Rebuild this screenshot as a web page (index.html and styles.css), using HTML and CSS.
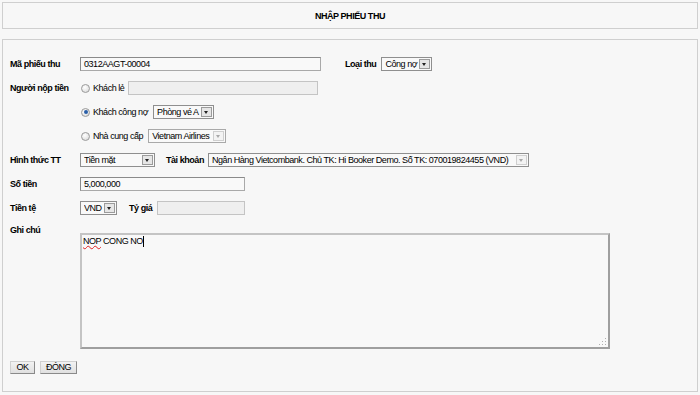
FILE: index.html
```html
<!DOCTYPE html>
<html lang="vi">
<head>
<meta charset="utf-8">
<title>Nhập phiếu thu</title>
<link rel="stylesheet" href="styles.css">
</head>
<body>
<div class="page">
  <div class="header">NHẬP PHIẾU THU</div>
  <div class="panel">
    <div class="row">
      <span class="lbl">Mã phiếu thu</span>
      <span class="input w-ma">0312AAGT-00004</span>
      <span class="lbl lbl-inline lbl-loai">Loại thu</span>
      <span class="select w-loai"><span class="sel-text">Công nợ</span><span class="arrow"></span></span>
    </div>
    <div class="row">
      <span class="lbl">Người nộp tiền</span>
      <span class="radio"></span>
      <span class="opt">Khách lẻ</span>
      <span class="input disabled w-le"></span>
    </div>
    <div class="row">
      <span class="lbl"></span>
      <span class="radio checked"></span>
      <span class="opt">Khách công nợ</span>
      <span class="select w-kcn"><span class="sel-text">Phòng vé A</span><span class="arrow"></span></span>
    </div>
    <div class="row">
      <span class="lbl"></span>
      <span class="radio"></span>
      <span class="opt">Nhà cung cấp</span>
      <span class="select disabled w-ncc"><span class="sel-text">Vietnam Airlines</span><span class="arrow"></span></span>
    </div>
    <div class="row">
      <span class="lbl">Hình thức TT</span>
      <span class="select w-htt"><span class="sel-text">Tiền mặt</span><span class="arrow"></span></span>
      <span class="lbl lbl-inline lbl-tk">Tài khoản</span>
      <span class="select disabled-arrow w-tk"><span class="sel-text">Ngân Hàng Vietcombank. Chủ TK: Hi Booker Demo. Số TK: 070019824455 (VND)</span><span class="arrow"></span></span>
    </div>
    <div class="row">
      <span class="lbl">Số tiền</span>
      <span class="input w-tien">5,000,000</span>
    </div>
    <div class="row">
      <span class="lbl">Tiền tệ</span>
      <span class="select w-vnd"><span class="sel-text">VND</span><span class="arrow"></span></span>
      <span class="lbl lbl-inline lbl-tg">Tỷ giá</span>
      <span class="input disabled w-tg"></span>
    </div>
    <div class="row row-note">
      <span class="lbl">Ghi chú</span>
    </div>
    <div class="note-wrap">
      <div class="textarea"><span class="typo">NOP</span> CONG NO<span class="caret"></span><span class="grip"></span></div>
    </div>
    <div class="buttons">
      <span class="btn btn-ok">OK</span>
      <span class="btn btn-close">ĐÓNG</span>
    </div>
  </div>
</div>
</body>
</html>
```
FILE: styles.css
```css
html, body {
  margin: 0;
  padding: 0;
  background: #f7f7f7;
}
body {
  font-family: "Liberation Sans", Arial, sans-serif;
  font-size: 9px;
  letter-spacing: -0.45px;
  color: #000;
}
.page {
  padding: 2px 2px 0 2px;
  display: flex;
  flex-direction: column;
  gap: 10px;
}
.header {
  height: 25px;
  border: 1px solid #cfcfcf;
  display: flex;
  align-items: center;
  justify-content: center;
  font-weight: bold;
}
.panel {
  border: 1px solid #cfcfcf;
  height: 339px;
  padding: 12px 7px 0 7px;
  display: flex;
  flex-direction: column;
}
.row {
  height: 24px;
  display: flex;
  align-items: center;
}
.lbl {
  width: 70px;
  flex: none;
  font-weight: bold;
  white-space: nowrap;
}
.lbl-inline { width: auto; }
.lbl-loai { margin-left: 24px; margin-right: 5px; }
.lbl-tk { margin-left: 11px; margin-right: 4px; }
.lbl-tg { margin-left: 12px; margin-right: 5px; }
.input {
  box-sizing: border-box;
  height: 14px;
  border: 1px solid #a9a9a9;
  border-top-color: #8a8a8a;
  border-left-color: #8a8a8a;
  background: #f9f9f9;
  padding: 0 3px;
  display: flex;
  align-items: center;
  line-height: 12px;
}
.input.disabled {
  background: #efefef;
  border-color: #c4c4c4;
}
.w-ma { width: 241px; }
.w-le { width: 190px; margin-left: 4px; }
.w-tien { width: 165px; }
.w-tg { width: 88px; }
.radio {
  box-sizing: border-box;
  width: 9px;
  height: 9px;
  border-radius: 50%;
  border: 1px solid #9a9a9a;
  background: radial-gradient(circle at 40% 35%, #ffffff 0%, #e2e2e2 70%);
  margin-left: 1px;
  margin-right: 3px;
  display: flex;
  align-items: center;
  justify-content: center;
  flex: none;
}
.radio.checked::after {
  content: "";
  width: 4px;
  height: 4px;
  border-radius: 50%;
  background: #2a5fa8;
}
.opt { white-space: nowrap; }
.select {
  box-sizing: border-box;
  height: 14px;
  border: 1px solid #8f8f8f;
  background: #f9f9f9;
  display: flex;
  align-items: center;
  padding-left: 3px;
  padding-right: 1px;
  flex: none;
}
.sel-text {
  flex: 1;
  white-space: nowrap;
  overflow: hidden;
  line-height: 12px;
}
.arrow {
  box-sizing: border-box;
  width: 11px;
  height: 10px;
  border: 1px solid #9b9b9b;
  background: #e6e6e6;
  position: relative;
  flex: none;
}
.arrow::after {
  content: "";
  position: absolute;
  left: 2px;
  top: 3px;
  border-left: 2.5px solid transparent;
  border-right: 2.5px solid transparent;
  border-top: 3px solid #222;
}
.select.disabled { border-color: #a9a9a9; }
.select.disabled .arrow,
.select.disabled-arrow .arrow {
  border-color: #cfcfcf;
  background: #f3f3f3;
}
.select.disabled .arrow::after,
.select.disabled-arrow .arrow::after {
  border-top-color: #a8a8a8;
}
.w-loai { width: 51px; }
.w-kcn { width: 61px; margin-left: 5px; }
.w-ncc { width: 78px; margin-left: 5px; }
.w-htt { width: 75px; }
.w-tk { width: 321px; }
.w-vnd { width: 37px; }
.row-note {
  height: 12px;
  margin-top: 4px;
}
.note-wrap {
  padding-left: 70px;
  margin-top: -3px;
}
.textarea {
  box-sizing: border-box;
  width: 530px;
  height: 116px;
  border: 2px solid #c4c4c4;
  border-right-color: #9f9f9f;
  border-bottom-color: #9f9f9f;
  background: #f8f8f8;
  padding: 1px 1px;
  position: relative;
  line-height: 11px;
}
.typo {
  text-decoration: underline wavy #e02020;
  text-decoration-thickness: 1px;
  text-underline-offset: 1px;
}
.caret {
  display: inline-block;
  width: 1px;
  height: 11px;
  background: #000;
  vertical-align: top;
}
.grip {
  position: absolute;
  right: 1px;
  bottom: 1px;
  width: 8px;
  height: 8px;
  background:
    linear-gradient(#b0b0b0, #b0b0b0) 6px 0 / 1px 1px no-repeat,
    linear-gradient(#b0b0b0, #b0b0b0) 3px 3px / 1px 1px no-repeat,
    linear-gradient(#b0b0b0, #b0b0b0) 6px 3px / 1px 1px no-repeat,
    linear-gradient(#b0b0b0, #b0b0b0) 0 6px / 1px 1px no-repeat,
    linear-gradient(#b0b0b0, #b0b0b0) 3px 6px / 1px 1px no-repeat,
    linear-gradient(#b0b0b0, #b0b0b0) 6px 6px / 1px 1px no-repeat;
}
.buttons {
  display: flex;
  gap: 5px;
  margin-top: 12px;
}
.btn {
  box-sizing: border-box;
  height: 13px;
  border: 1px solid #8a8a8a;
  border-top-color: #d0d0d0;
  border-left-color: #d0d0d0;
  background: linear-gradient(#f2f2f2, #e0e0e0);
  display: flex;
  align-items: center;
  justify-content: center;
  line-height: 11px;
}
.btn-ok { width: 25px; }
.btn-close { width: 37px; }
```
